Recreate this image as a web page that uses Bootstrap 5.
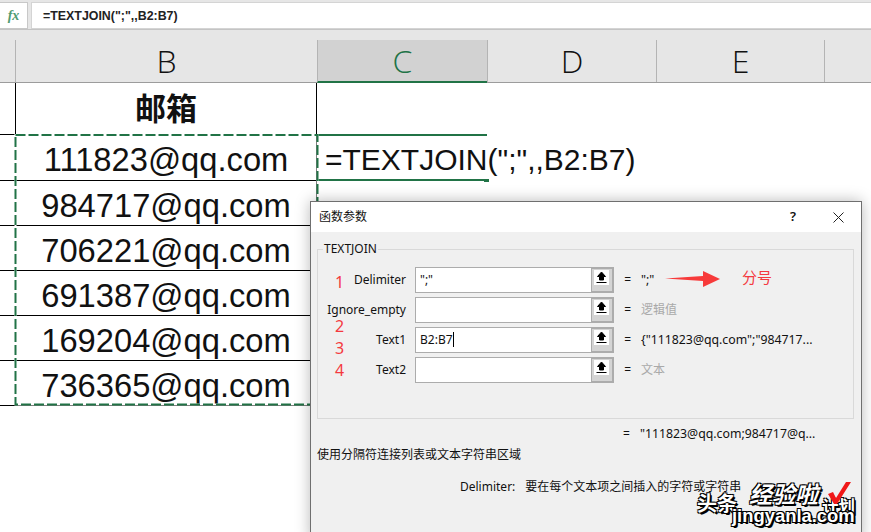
<!DOCTYPE html>
<html lang="zh">
<head>
    <meta charset="UTF-8">
    <title>TEXTJOIN</title>
    <link rel="stylesheet" href="https://cdn.jsdelivr.net/npm/bootstrap@5.3.0/dist/css/bootstrap.min.css">
    <style>
        html, body { height: 532px; overflow: hidden; background: #fff; }
        .page { position: relative; width: 871px; height: 532px; overflow: hidden; font-family: "Liberation Sans", "Noto Sans CJK SC", sans-serif; color: #000; }

        .fbar { height: 30px; padding-top: 2px; background: #e6e6e6; border-bottom: 1px solid #c4c4c4; }
        .fx-box { width: 28px; height: 27px; background: #fff; border: 1px solid #c8c8c8; border-left: 0; color: #4f9c72; font: italic bold 14px "Liberation Serif", serif; }
        .f-input { margin-left: 3px; padding-left: 11px; line-height: 27px; height: 27px; background: #fff; border: 1px solid #d4d4d4; border-right: 0; font-size: 12.4px; font-weight: 700; color: #222; }

        .hband { height: 10px; background: #e6e6e6; }
        .grid-row { display: grid; grid-template-columns: 15px 302px 170px 169px 168px 47px; grid-template-rows: minmax(0, 1fr); }
        .hrow { height: 43px; background: #e6e6e6; border-bottom: 1px solid #9c9c9c; }
        .hcell { border-left: 1px solid #b4b4b4; font: 300 32px/41px "Open Sans", sans-serif; text-align: center; color: #111; }
        .hcell-on { background: #d2d2d2; color: #217346; border-bottom: 2px solid #217346; height: 43px; }
        .row-title { height: 52px; }
        .row-data { height: 45px; }
        .row-first { height: 46px; }
        .gcell { border-bottom: 1px solid #000; }
        .gcell-b { border-left: 1px solid #000; border-right: 1px solid #000; text-align: center; font-size: 32.7px; line-height: 50px; color: #111; white-space: nowrap; }
        .title-b { font-size: 31px; font-weight: 700; line-height: 54px; }
        .gcell-c { font-size: 30px; line-height: 48px; padding-left: 8px; white-space: nowrap; color: #111; }
        .sel-c { border-top: 2px solid #217346; border-bottom: 2px solid #217346; margin-top: -1px; height: 47px; }
        .handle { position: absolute; left: 484px; top: 179px; width: 5px; height: 3px; background: #217346; }
        .ants { position: absolute; left: 0; top: 0; }

        .dlg { position: absolute; left: 310px; top: 201px; width: 552px; height: 340px; background: #f0f0f0; border: 1px solid #6f6f6f; box-shadow: 0 0 14px rgba(0, 0, 0, .28); font-family: "Noto Sans", "Noto Sans CJK SC", sans-serif; font-size: 12px; color: #111; }
        .dlg-title { height: 30px; background: #fff; padding: 0 17px 0 8px; }
        .dlg-title svg { display: block; }
        .q-mark { margin-right: 37px; font-size: 13px; font-weight: 600; }
        .group { margin: 17px 7px 0 6px; height: 170px; border: 1px solid #d9d9d9; padding: 17px 0 0; position: relative; }
        .group-name { position: absolute; left: 5px; top: -9px; padding: 0 1px; background: #f0f0f0; line-height: 16px; }
        .arg-row { height: 26px; margin-bottom: 4px; line-height: 26px; }
        .arg-label { width: 88px; margin-right: 9px; text-align: right; white-space: nowrap; }
        .arg-input { width: 177px; height: 26px; background: #fff; border: 1px solid #acacac; padding-left: 4px; line-height: 24px; white-space: nowrap; }
        .caret-bar { display: inline-block; width: 1px; height: 15px; background: #000; vertical-align: -3px; }
        .arg-btn { width: 22px; height: 26px; background: #d4d4d4; border: 2px solid #acacac; border-left: 0; padding: 1px 2px 0 2px; }
        .arg-btn span { display: block; width: 15px; height: 15px; background: #fff; }
        .arg-btn svg { display: block; }
        .arg-eq { width: 17px; text-align: right; flex: none; }
        .arg-val { white-space: nowrap; padding-left: 10px; font-size: 12.3px; }
        .muted-val { color: #a9a9a9; font-size: 12px; }
        .result { padding: 6px 0 0 312px; white-space: nowrap; }
        .result-val { padding-left: 10px; font-size: 12.3px; }
        .help { margin: 3px 0 0 6px; }
        .arg-help { margin: 14px 0 0 149px; white-space: nowrap; }
        .arg-help span { margin-left: 10px; }

        .red-no { position: absolute; left: 335px; color: #f4393f; font: 16px/18px "Noto Sans", sans-serif; }
        .red-arrow { position: absolute; left: 664px; top: 270px; }
        .red-label { position: absolute; left: 742px; top: 267px; color: #f4393f; font: 15px/20px "Noto Sans CJK SC", sans-serif; }

        .wm { position: absolute; color: #fff; font-family: "Noto Sans CJK SC", sans-serif; font-weight: 700; white-space: nowrap; text-shadow: 1px 1px 0 #000, -1px 1px 0 #000, 1px -1px 0 #000, -1px -1px 0 #000, 2px 2px 0 #000; }
        .wm-a { left: 697px; top: 491px; font-size: 20px; line-height: 24px; }
        .wm-b { left: 749px; top: 478px; font-size: 23px; line-height: 30px; font-style: italic; }
        .wm-c { left: 732px; top: 505px; font-family: "Liberation Sans", sans-serif; font-size: 18.4px; line-height: 22px; }
        .wm-d { left: 822px; top: 496px; font-size: 16.5px; line-height: 20px; }
        .wm-check { position: absolute; left: 827px; top: 481px; }
    </style>
</head>
<body>
<div class="page">
    <div class="fbar d-flex">
        <div class="fx-box d-flex align-items-center justify-content-center">fx</div>
        <div class="f-input flex-grow-1">=TEXTJOIN(";",,B2:B7)</div>
    </div>
    <div class="hband"></div>
    <div class="grid-row hrow">
        <div></div>
        <div class="hcell">B</div>
        <div class="hcell hcell-on">C</div>
        <div class="hcell">D</div>
        <div class="hcell">E</div>
        <div class="hcell"></div>
    </div>
    <div class="grid-row row-title">
        <div class="gcell"></div>
        <div class="gcell gcell-b title-b">邮箱</div>
    </div>
    <div class="grid-row row-first">
        <div class="gcell"></div>
        <div class="gcell gcell-b">111823@qq.com</div>
        <div class="gcell-c sel-c">=TEXTJOIN(";",,B2:B7)</div>
    </div>
    <div class="grid-row row-data"><div class="gcell"></div><div class="gcell gcell-b">984717@qq.com</div></div>
    <div class="grid-row row-data"><div class="gcell"></div><div class="gcell gcell-b">706221@qq.com</div></div>
    <div class="grid-row row-data"><div class="gcell"></div><div class="gcell gcell-b">691387@qq.com</div></div>
    <div class="grid-row row-data"><div class="gcell"></div><div class="gcell gcell-b">169204@qq.com</div></div>
    <div class="grid-row row-data"><div class="gcell"></div><div class="gcell gcell-b">736365@qq.com</div></div>

    <div class="handle"></div>
    <svg class="ants" width="871" height="532">
        <rect x="15.5" y="135" width="302" height="269.5" fill="none" stroke="#fff" stroke-width="2"/>
        <rect x="15.5" y="135" width="302" height="269.5" fill="none" stroke="#217346" stroke-width="2" stroke-dasharray="10 3"/>
    </svg>

    <div class="dlg">
        <div class="dlg-title d-flex align-items-center">
            <span class="flex-grow-1">函数参数</span>
            <span class="q-mark">?</span>
            <svg width="11" height="11" viewBox="0 0 11 11"><path d="M.5.5l10 10M10.5.5l-10 10" stroke="#222" fill="none"/></svg>
        </div>
        <div class="group">
            <span class="group-name">TEXTJOIN</span>
            <div class="arg-row d-flex">
                <div class="arg-label">Delimiter</div>
                <div class="arg-input">";"</div>
                <div class="arg-btn"><span><svg width="15" height="15" viewBox="0 0 15 15"><path d="M7.5 2L11.5 6.5H9.5V10h-4V6.5H3.5zM2.5 12.5h10" fill="#000" stroke="#000"/></svg></span></div>
                <div class="arg-eq">=</div>
                <div class="arg-val">";"</div>
            </div>
            <div class="arg-row d-flex">
                <div class="arg-label">Ignore_empty</div>
                <div class="arg-input"></div>
                <div class="arg-btn"><span><svg width="15" height="15" viewBox="0 0 15 15"><path d="M7.5 2L11.5 6.5H9.5V10h-4V6.5H3.5zM2.5 12.5h10" fill="#000" stroke="#000"/></svg></span></div>
                <div class="arg-eq">=</div>
                <div class="arg-val muted-val">逻辑值</div>
            </div>
            <div class="arg-row d-flex">
                <div class="arg-label">Text1</div>
                <div class="arg-input">B2:B7<span class="caret-bar"></span></div>
                <div class="arg-btn"><span><svg width="15" height="15" viewBox="0 0 15 15"><path d="M7.5 2L11.5 6.5H9.5V10h-4V6.5H3.5zM2.5 12.5h10" fill="#000" stroke="#000"/></svg></span></div>
                <div class="arg-eq">=</div>
                <div class="arg-val">{"111823@qq.com";"984717...</div>
            </div>
            <div class="arg-row d-flex">
                <div class="arg-label">Text2</div>
                <div class="arg-input"></div>
                <div class="arg-btn"><span><svg width="15" height="15" viewBox="0 0 15 15"><path d="M7.5 2L11.5 6.5H9.5V10h-4V6.5H3.5zM2.5 12.5h10" fill="#000" stroke="#000"/></svg></span></div>
                <div class="arg-eq">=</div>
                <div class="arg-val muted-val">文本</div>
            </div>
        </div>
        <div class="result">=<span class="result-val">"111823@qq.com;984717@q...</span></div>
        <div class="help">使用分隔符连接列表或文本字符串区域</div>
        <div class="arg-help">Delimiter:<span>要在每个文本项之间插入的字符或字符串</span></div>
    </div>

    <span class="red-no" style="top:273px">1</span>
    <span class="red-no" style="top:317px">2</span>
    <span class="red-no" style="top:339px">3</span>
    <span class="red-no" style="top:361px">4</span>
    <svg class="red-arrow" width="58" height="20" viewBox="0 0 58 20"><path d="M1 8.5L39 6V1L56 9L39 17V11z" fill="#f73a3a"/></svg>
    <span class="red-label">分号</span>

    <span class="wm wm-a">头条</span>
    <span class="wm wm-b">经验啦</span>
    <span class="wm wm-d">计划</span>
    <span class="wm wm-c">jingyanla.com</span>
    <svg class="wm-check" width="24" height="24" viewBox="0 0 24 24"><path d="M1 13L6 11L9 17L19 1H24L10 23H7z" fill="#f01818"/></svg>
</div>
<script src="https://cdn.jsdelivr.net/npm/bootstrap@5.3.0/dist/js/bootstrap.bundle.min.js"></script>
</body>
</html>
